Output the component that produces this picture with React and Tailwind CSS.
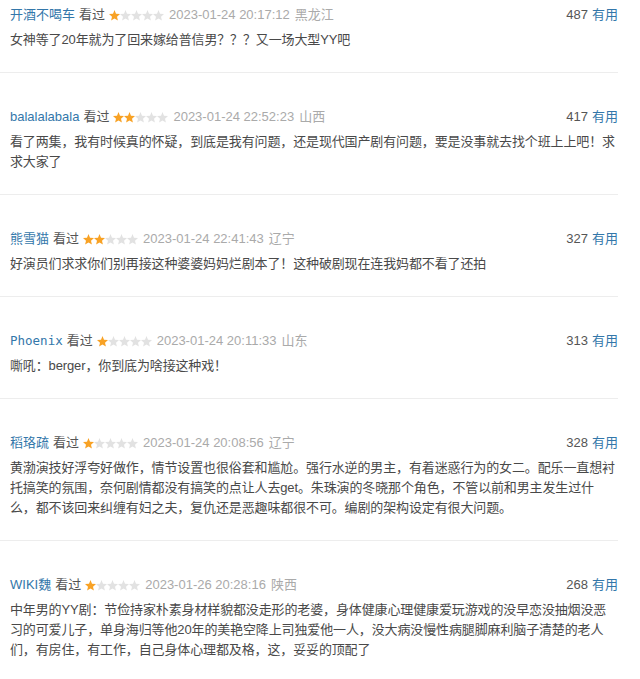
import React from "react";

const comments = [
  {
    name: "开酒不喝车",
    stars: 1,
    time: "2023-01-24 20:17:12",
    location: "黑龙江",
    votes: 487,
    text: "女神等了20年就为了回来嫁给普信男？？？又一场大型YY吧",
  },
  {
    name: "balalalabala",
    stars: 2,
    time: "2023-01-24 22:52:23",
    location: "山西",
    votes: 417,
    text: "看了两集，我有时候真的怀疑，到底是我有问题，还是现代国产剧有问题，要是没事就去找个班上上吧！求求大家了",
  },
  {
    name: "熊雪猫",
    stars: 2,
    time: "2023-01-24 22:41:43",
    location: "辽宁",
    votes: 327,
    text: "好演员们求求你们别再接这种婆婆妈妈烂剧本了！这种破剧现在连我妈都不看了还拍",
  },
  {
    name: "Phoenix",
    mono: true,
    stars: 1,
    time: "2023-01-24 20:11:33",
    location: "山东",
    votes: 313,
    text: "嘶吼：berger，你到底为啥接这种戏！",
  },
  {
    name: "稻珞疏",
    stars: 1,
    time: "2023-01-24 20:08:56",
    location: "辽宁",
    votes: 328,
    text: "黄渤演技好浮夸好做作，情节设置也很俗套和尴尬。强行水逆的男主，有着迷惑行为的女二。配乐一直想衬托搞笑的氛围，奈何剧情都没有搞笑的点让人去get。朱珠演的冬晓那个角色，不管以前和男主发生过什么，都不该回来纠缠有妇之夫，复仇还是恶趣味都很不可。编剧的架构设定有很大问题。",
  },
  {
    name: "WIKI魏",
    stars: 1,
    time: "2023-01-26 20:28:16",
    location: "陕西",
    votes: 268,
    text: "中年男的YY剧：节俭持家朴素身材样貌都没走形的老婆，身体健康心理健康爱玩游戏的没早恋没抽烟没恶习的可爱儿子，单身海归等他20年的美艳空降上司独爱他一人，没大病没慢性病腿脚麻利脑子清楚的老人们，有房住，有工作，自己身体心理都及格，这，妥妥的顶配了",
  },
];

// 11px star, drawn once and repeated
const starPoints =
  "5.5,0 7,3.7 11,4.1 8,6.7 8.9,10.6 5.5,8.6 2.1,10.6 3,6.7 0,4.1 4,3.7";

const Stars = ({ count }) => (
  <svg width="55" height="11" viewBox="0 0 55 11" className="shrink-0">
    {[0, 1, 2, 3, 4].map((i) => (
      <polygon
        key={i}
        points={starPoints}
        transform={`translate(${i * 11}, 0)`}
        fill={i < count ? "#f8a225" : "#e2e2e2"}
      />
    ))}
  </svg>
);

const Comment = ({ c, first }) => (
  <div
    className={`border-b border-[#ededed] pl-[10px] pb-[22px] ${
      first ? "pt-[5px]" : "pt-[34px]"
    }`}
  >
    <div className="flex items-center h-5 leading-5 text-[13px] whitespace-nowrap">
      <span
        className="text-[#3377aa]"
        style={c.mono ? { fontFamily: '"DejaVu Sans Mono", monospace', fontSize: "12.5px" } : undefined}
      >
        {c.name}
      </span>
      <span className="ml-[4px] text-[#555]">看过</span>
      <span className="ml-[4px] flex items-center">
        <Stars count={c.stars} />
      </span>
      <span className="ml-[5px] text-[#aaa]">{c.time}</span>
      <span className="ml-[5px] text-[#aaa]">{c.location}</span>
      <span className="ml-auto text-[#555]">{c.votes}</span>
      <span className="ml-[4px] text-[#3377aa]">有用</span>
    </div>
    <p className="mt-[5px] text-[13px] leading-5 text-[#494949] tracking-[-0.13px]">
      {c.text}
    </p>
  </div>
);

export default function App() {
  return (
    <div
      className="w-[640px] h-[679px] overflow-hidden bg-white pr-[22px]"
      style={{ fontFamily: '"Liberation Sans", Arial, "Noto Sans CJK SC", sans-serif' }}
    >
      {comments.map((c, i) => (
        <Comment key={i} c={c} first={i === 0} />
      ))}
    </div>
  );
}
